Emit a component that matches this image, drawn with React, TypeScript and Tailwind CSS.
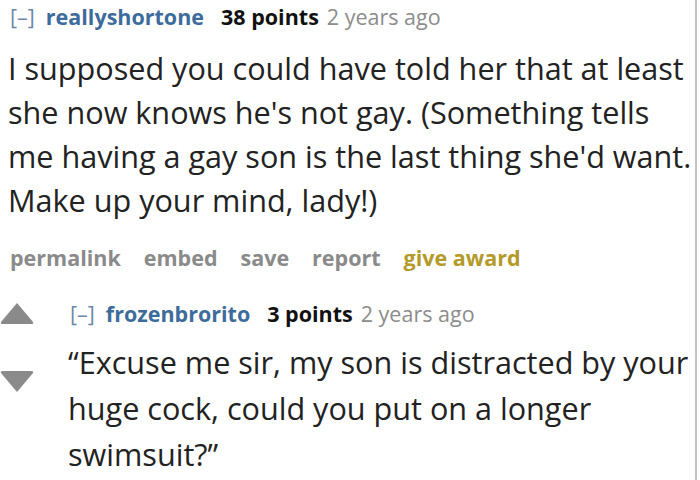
import React from "react";

const FONT = { fontFamily: '"Open Sans", "Noto Sans", sans-serif' };

function Header({ user, points, time }: { user: string; points: string; time: string }) {
  return (
    <div className="flex items-baseline text-[21.5px] leading-[34px]">
      <span className="text-[#6b87ab]">[–]</span>
      <span className="ml-[11px] font-bold text-[#3d6b9c]">{user}</span>
      <span className="ml-[17px] font-bold text-[#111]">{points}</span>
      <span className="ml-[8px] text-[#8c8c8c]">{time}</span>
    </div>
  );
}

export default function App() {
  const top = [
    "I supposed you could have told her that at least",
    "she now knows he's not gay. (Something tells",
    "me having a gay son is the last thing she'd want.",
    "Make up your mind, lady!)",
  ];
  const reply = [
    "“Excuse me sir, my son is distracted by your",
    "huge cock, could you put on a longer",
    "swimsuit?”",
  ];
  return (
    <div className="h-[480px] w-[700px] overflow-hidden bg-white" style={FONT}>
      <div className="h-full w-[697px] border-r-2 border-[#c4c4c4]">
        <div className="pl-[10px] pt-0">
          <Header user="reallyshortone" points="38 points" time="2 years ago" />
          <div className="-ml-[2px] mt-[12px] text-[30.6px] leading-[44px] text-[#222]">
            {top.map((l) => (
              <div key={l} className="whitespace-nowrap">{l}</div>
            ))}
          </div>
          <div className="mt-[19px] flex gap-[23px] text-[21.5px] font-bold leading-[34px] text-[#8a8a8a]">
            <span>permalink</span>
            <span>embed</span>
            <span>save</span>
            <span>report</span>
            <span className="text-[#b39a2a]">give award</span>
          </div>
        </div>
        <div className="mt-[22px] flex">
          <div className="flex w-[70px] flex-col pt-[5px]">
            <svg width="34" height="23" viewBox="0 0 34 23">
              <path d="M17 1 L33 20 Q34 22 31 22 L3 22 Q0 22 1 20 Z" fill="#8a8a8a" />
            </svg>
            <svg className="mt-[45px]" width="34" height="23" viewBox="0 0 34 23">
              <path d="M17 22 L33 3 Q34 1 31 1 L3 1 Q0 1 1 3 Z" fill="#8a8a8a" />
            </svg>
          </div>
          <div>
            <Header user="frozenbrorito" points="3 points" time="2 years ago" />
            <div className="-ml-[2px] mt-[8px] text-[30.6px] leading-[46px] text-[#222]">
              {reply.map((l) => (
                <div key={l} className="whitespace-nowrap">{l}</div>
              ))}
            </div>
          </div>
        </div>
      </div>
    </div>
  );
}
